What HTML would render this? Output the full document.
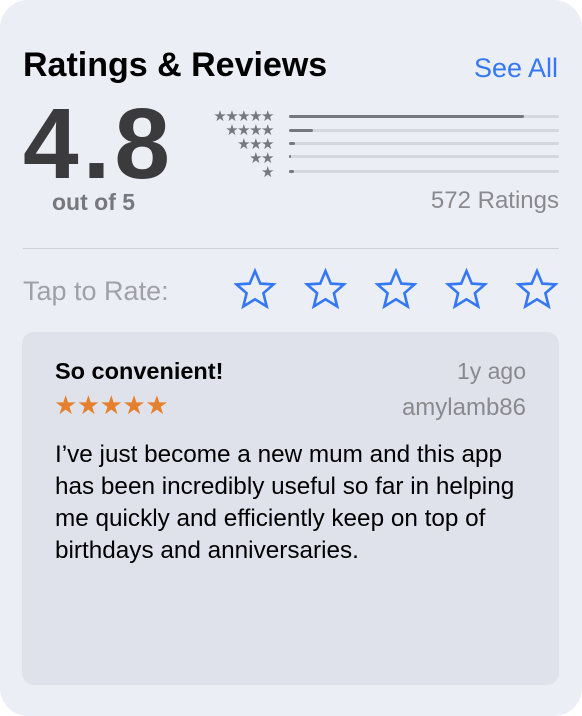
<!DOCTYPE html>
<html><head><meta charset="utf-8"><style>
*{margin:0;padding:0;box-sizing:border-box}
body{width:582px;height:716px;background:#fff;font-family:"Liberation Sans",sans-serif;position:relative;overflow:hidden}
.card{position:absolute;left:0;top:0;width:582px;height:716px;background:#ebeef4;border-radius:28px}
.abs{position:absolute;white-space:nowrap}
.bar{position:absolute;left:289px;width:270px;height:3px;background:#d4d7dd;border-radius:2px}
.bar i{display:block;height:3px;background:#77787d;border-radius:2px}
.sr{position:absolute;right:309px;color:#77787d;font-size:15px;letter-spacing:-1.5px;line-height:14px}
.inner{position:absolute;left:22px;top:332px;width:537px;height:353px;background:#dfe2eb;border-radius:12px}
</style></head><body>
<div class="card"></div>
<div class="abs" style="left:23px;top:46px;font-size:34px;font-weight:bold;color:#000">Ratings &amp; Reviews</div>
<div class="abs" style="right:24px;top:53px;font-size:27px;color:#3478f6">See All</div>
<div class="abs" style="left:23px;top:94px;font-size:100px;font-weight:bold;color:#3b3b3e;letter-spacing:4px;line-height:100px">4.8</div>
<div class="abs" style="left:52px;top:189px;font-size:23px;font-weight:bold;color:#77787d">out of 5</div>
<div class="sr" style="top:110px">★★★★★</div>
<div class="sr" style="top:124px">★★★★</div>
<div class="sr" style="top:138px">★★★</div>
<div class="sr" style="top:152px">★★</div>
<div class="sr" style="top:166px">★</div>
<div class="bar" style="top:115px"><i style="width:235px"></i></div>
<div class="bar" style="top:129px"><i style="width:24px"></i></div>
<div class="bar" style="top:142px"><i style="width:6px"></i></div>
<div class="bar" style="top:155px"><i style="width:2px"></i></div>
<div class="bar" style="top:170px"><i style="width:5px"></i></div>
<div class="abs" style="right:23px;top:187px;font-size:24px;color:#8a8a8e">572 Ratings</div>
<div class="abs" style="left:23px;top:248px;width:536px;height:1px;background:#d0d2d8"></div>
<div class="abs" style="left:23px;top:276px;font-size:27px;color:#a0a1a6">Tap to Rate:</div>
<svg class="abs" style="left:234px;top:268px" width="330" height="44" viewBox="0 0 330 44">
<defs><path id="s" d="M21 3 L26.3 15.6 L39.5 16.4 L29.4 25.2 L32.7 38.5 L21 31.3 L9.3 38.5 L12.6 25.2 L2.5 16.4 L15.7 15.6 Z" fill="none" stroke="#3478f6" stroke-width="2.6" stroke-linejoin="miter"/></defs>
<use href="#s" x="0"/><use href="#s" x="70.5"/><use href="#s" x="141"/><use href="#s" x="211.5"/><use href="#s" x="282"/>
</svg>
<div class="inner"></div>
<div class="abs" style="left:55px;top:358px;font-size:23.5px;font-weight:bold;color:#000">So convenient!</div>
<div class="abs" style="right:56px;top:358px;font-size:23px;color:#8a8a8e">1y ago</div>
<div class="abs" style="left:54px;top:390px;font-size:26px;color:#e5812e;letter-spacing:-0.5px">★★★★★</div>
<div class="abs" style="right:56px;top:394px;font-size:24px;color:#8a8a8e">amylamb86</div>
<div class="abs" style="left:55px;top:439px;font-size:24.3px;color:#000;line-height:32px;white-space:normal;width:482px">I’ve just become a new mum and this app has been incredibly useful so far in helping me quickly and efficiently keep on top of birthdays and anniversaries.</div>
</body></html>
